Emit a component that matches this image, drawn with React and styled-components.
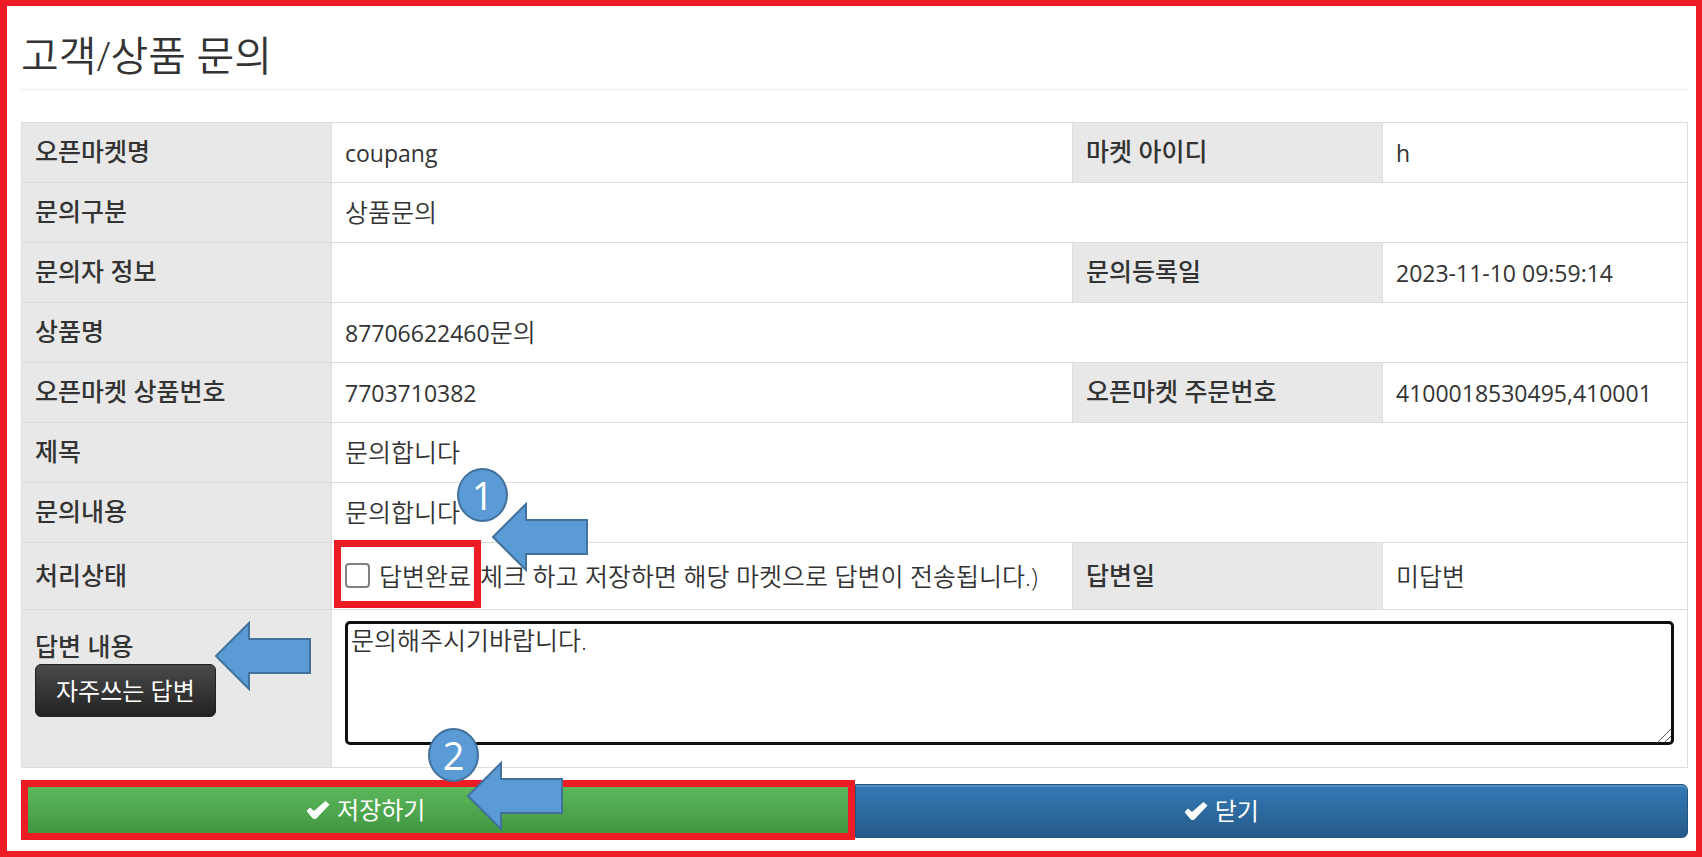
import React, { useState } from 'react';
import styled, { createGlobalStyle } from 'styled-components';

const CheckIcon = () => (
  <Icon viewBox="0 0 24 20" aria-hidden="true">
    <path d="M1 11 L4 8 L8 11.4 L19.6 1.4 L23 4.6 L10 18.4 H7.2 Z" />
  </Icon>
);

const Arrow = ({ left, top }) => (
  <Marker $left={left} $top={top}>
    <ArrowShape viewBox="0 0 96 70" aria-hidden="true">
      <path d="M1 35 L34 2 V18 H95 V52 H34 V68 Z" />
    </ArrowShape>
  </Marker>
);

const Step = ({ left, top, children }) => (
  <Marker $left={left} $top={top}>
    <StepBadge>{children}</StepBadge>
  </Marker>
);

const App = () => {
  const [done, setDone] = useState(false);
  const [answer, setAnswer] = useState('문의해주시기바랍니다.');

  return (
    <>
      <GlobalStyle />
      <Frame>
        <Title>고객/상품 문의</Title>
        <Table>
          <colgroup>
            <LabelCol />
            <WideCol />
            <LabelCol />
            <NarrowCol />
          </colgroup>
          <tbody>
            <tr>
              <HeadCell scope="row">오픈마켓명</HeadCell>
              <Cell>
                <Latin>coupang</Latin>
              </Cell>
              <HeadCell scope="row">마켓 아이디</HeadCell>
              <Cell>
                <Latin>h</Latin>
              </Cell>
            </tr>
            <tr>
              <HeadCell scope="row">문의구분</HeadCell>
              <Cell colSpan={3}>상품문의</Cell>
            </tr>
            <tr>
              <HeadCell scope="row">문의자 정보</HeadCell>
              <Cell />
              <HeadCell scope="row">문의등록일</HeadCell>
              <Cell>
                <Latin>2023-11-10 09:59:14</Latin>
              </Cell>
            </tr>
            <tr>
              <HeadCell scope="row">상품명</HeadCell>
              <Cell colSpan={3}>
                <Latin>87706622460</Latin>문의
              </Cell>
            </tr>
            <tr>
              <HeadCell scope="row">오픈마켓 상품번호</HeadCell>
              <Cell>
                <Latin>7703710382</Latin>
              </Cell>
              <HeadCell scope="row">오픈마켓 주문번호</HeadCell>
              <Cell>
                <Latin>4100018530495,410001</Latin>
              </Cell>
            </tr>
            <tr>
              <HeadCell scope="row">제목</HeadCell>
              <Cell colSpan={3}>문의합니다</Cell>
            </tr>
            <tr>
              <HeadCell scope="row">문의내용</HeadCell>
              <Cell colSpan={3}>
                문의합니다
                <Step left={125} top={-15}>1</Step>
              </Cell>
            </tr>
            <tr>
              <HeadCell scope="row">처리상태</HeadCell>
              <Cell>
                <StatusLine>
                  <CheckLabel>
                    <Checkbox
                      type="checkbox"
                      checked={done}
                      onChange={(e) => setDone(e.target.checked)}
                    />
                    답변완료
                    <CheckHighlight />
                  </CheckLabel>
                  <span>체크 하고 저장하면 해당 마켓으로 답변이 전송됩니다.)</span>
                </StatusLine>
                <Arrow left={160} top={-41} />
              </Cell>
              <HeadCell scope="row">답변일</HeadCell>
              <Cell>미답변</Cell>
            </tr>
            <tr>
              <AnswerHead scope="row">
                <label htmlFor="answer">답변 내용</label>
                <DarkButton type="button">자주쓰는 답변</DarkButton>
                <Arrow left={193} top={11} />
              </AnswerHead>
              <Cell colSpan={3}>
                <AnswerBox>
                  <Answer
                    id="answer"
                    value={answer}
                    onChange={(e) => setAnswer(e.target.value)}
                  />
                  <Grip viewBox="0 0 14 14" aria-hidden="true">
                    <path d="M1 14 L14 1 M8 14 L14 8" />
                  </Grip>
                </AnswerBox>
              </Cell>
            </tr>
          </tbody>
        </Table>
        <Actions>
          <SaveButton type="button">
            <CheckIcon />
            저장하기
          </SaveButton>
          <CloseButton type="button">
            <CheckIcon />
            닫기
          </CloseButton>
          <Step left={407} top={-52}>2</Step>
          <Arrow left={446} top={-19} />
        </Actions>
      </Frame>
    </>
  );
};

export default App;

const GlobalStyle = createGlobalStyle`
  * {
    box-sizing: border-box;
  }
  body {
    margin: 0;
    background: #fff;
    color: #333;
    font-family: 'Open Sans', 'Noto Sans CJK KR', sans-serif;
    font-size: 25px;
    font-weight: 350;
    line-height: 36px;
  }
  button,
  textarea {
    font: inherit;
  }
`;

const Frame = styled.main`
  min-height: 100vh;
  padding: 25px 8px 11px 14px;
  border: 6px solid #ed1c24;
  border-left-width: 7px;
`;

const Title = styled.h1`
  margin: 0 0 32px;
  padding-bottom: 10px;
  border-bottom: 1px solid #eee;
  font-size: 41px;
  font-weight: 350;
  line-height: 48px;
`;

const Table = styled.table`
  width: 100%;
  table-layout: fixed;
  border-collapse: collapse;
`;

const LabelCol = styled.col`
  width: 310px;
`;

const WideCol = styled.col`
  width: auto;
`;

const NarrowCol = styled.col`
  width: 305px;
`;

const Cell = styled.td`
  position: relative;
  height: 60px;
  padding: 11px 13px 12px;
  border: 1px solid #ddd;
  vertical-align: middle;
`;

const HeadCell = styled.th`
  position: relative;
  padding: 10px 13px 13px;
  border: 1px solid #ddd;
  background: #e8e8e8;
  font-weight: 500;
  text-align: left;
  vertical-align: middle;
`;

const AnswerHead = styled(HeadCell)`
  padding-top: 18px;
  vertical-align: top;
  label {
    display: block;
  }
`;

const Latin = styled.span`
  font-size: 23px;
  line-height: 24px;
  font-weight: 400;
`;

const StatusLine = styled.div`
  display: flex;
  align-items: center;
  height: 43px;
  white-space: nowrap;
`;

const CheckLabel = styled.label`
  position: relative;
  display: flex;
  flex: none;
  align-items: center;
  gap: 9px;
  width: 135px;
`;

const Checkbox = styled.input`
  appearance: none;
  width: 25px;
  height: 25px;
  margin: 0;
  border: 2px solid #808080;
  border-radius: 4px;
  background: #fff;
  &:checked {
    background: #0075ff;
  }
`;

const CheckHighlight = styled.span`
  position: absolute;
  inset: -18px -1px -14px -11px;
  border: 7px solid #ed1c24;
  pointer-events: none;
`;

const DarkButton = styled.button`
  display: block;
  height: 53px;
  padding: 0 20px;
  border: 1px solid #222;
  border-radius: 6px;
  background: linear-gradient(#4a4a4a, #222);
  color: #fff;
  font-size: 24px;
  font-weight: 400;
`;

const AnswerBox = styled.div`
  position: relative;
  margin-bottom: 10px;
`;

const Answer = styled.textarea`
  display: block;
  width: 100%;
  height: 124px;
  padding: 0 3px;
  border: 3px solid #101010;
  border-radius: 5px;
  outline: none;
  color: #333;
  line-height: 32px;
  resize: none;
`;

const Grip = styled.svg`
  position: absolute;
  right: 3px;
  bottom: 3px;
  width: 14px;
  height: 14px;
  fill: none;
  stroke: #555;
  pointer-events: none;
`;

const Actions = styled.div`
  position: relative;
  display: flex;
  margin-top: 12px;
`;

const ActionButton = styled.button`
  display: flex;
  align-items: center;
  justify-content: center;
  gap: 7px;
  width: 50%;
  color: #fff;
  font-size: 24px;
  font-weight: 400;
`;

const SaveButton = styled(ActionButton)`
  height: 60px;
  padding: 0 144px 0 0;
  border: 7px solid #ed1c24;
  background: linear-gradient(#5cb85c, #419641) padding-box;
`;

const CloseButton = styled(ActionButton)`
  height: 54px;
  margin-top: 4px;
  padding: 0 100px 0 0;
  border: 1px solid #245580;
  border-radius: 0 6px 6px 0;
  background: linear-gradient(#337ab7, #265a88);
  box-shadow: inset 0 2px 0 rgba(255, 255, 255, 0.15);
`;

const Icon = styled.svg`
  width: 24px;
  height: 20px;
  fill: #fff;
  stroke: #fff;
  stroke-linejoin: round;
`;

const Marker = styled.div`
  position: absolute;
  left: ${(props) => props.$left}px;
  top: ${(props) => props.$top}px;
  z-index: 1;
  pointer-events: none;
`;

const ArrowShape = styled.svg`
  display: block;
  width: 96px;
  height: 70px;
  fill: #5b9bd5;
  stroke: #41719c;
  stroke-width: 2;
`;

const StepBadge = styled.span`
  display: flex;
  align-items: center;
  justify-content: center;
  width: 51px;
  height: 54px;
  border: 2px solid #41719c;
  border-radius: 50%;
  background: #5b9bd5;
  color: #fff;
  font-size: 38px;
  font-weight: 400;
`;
